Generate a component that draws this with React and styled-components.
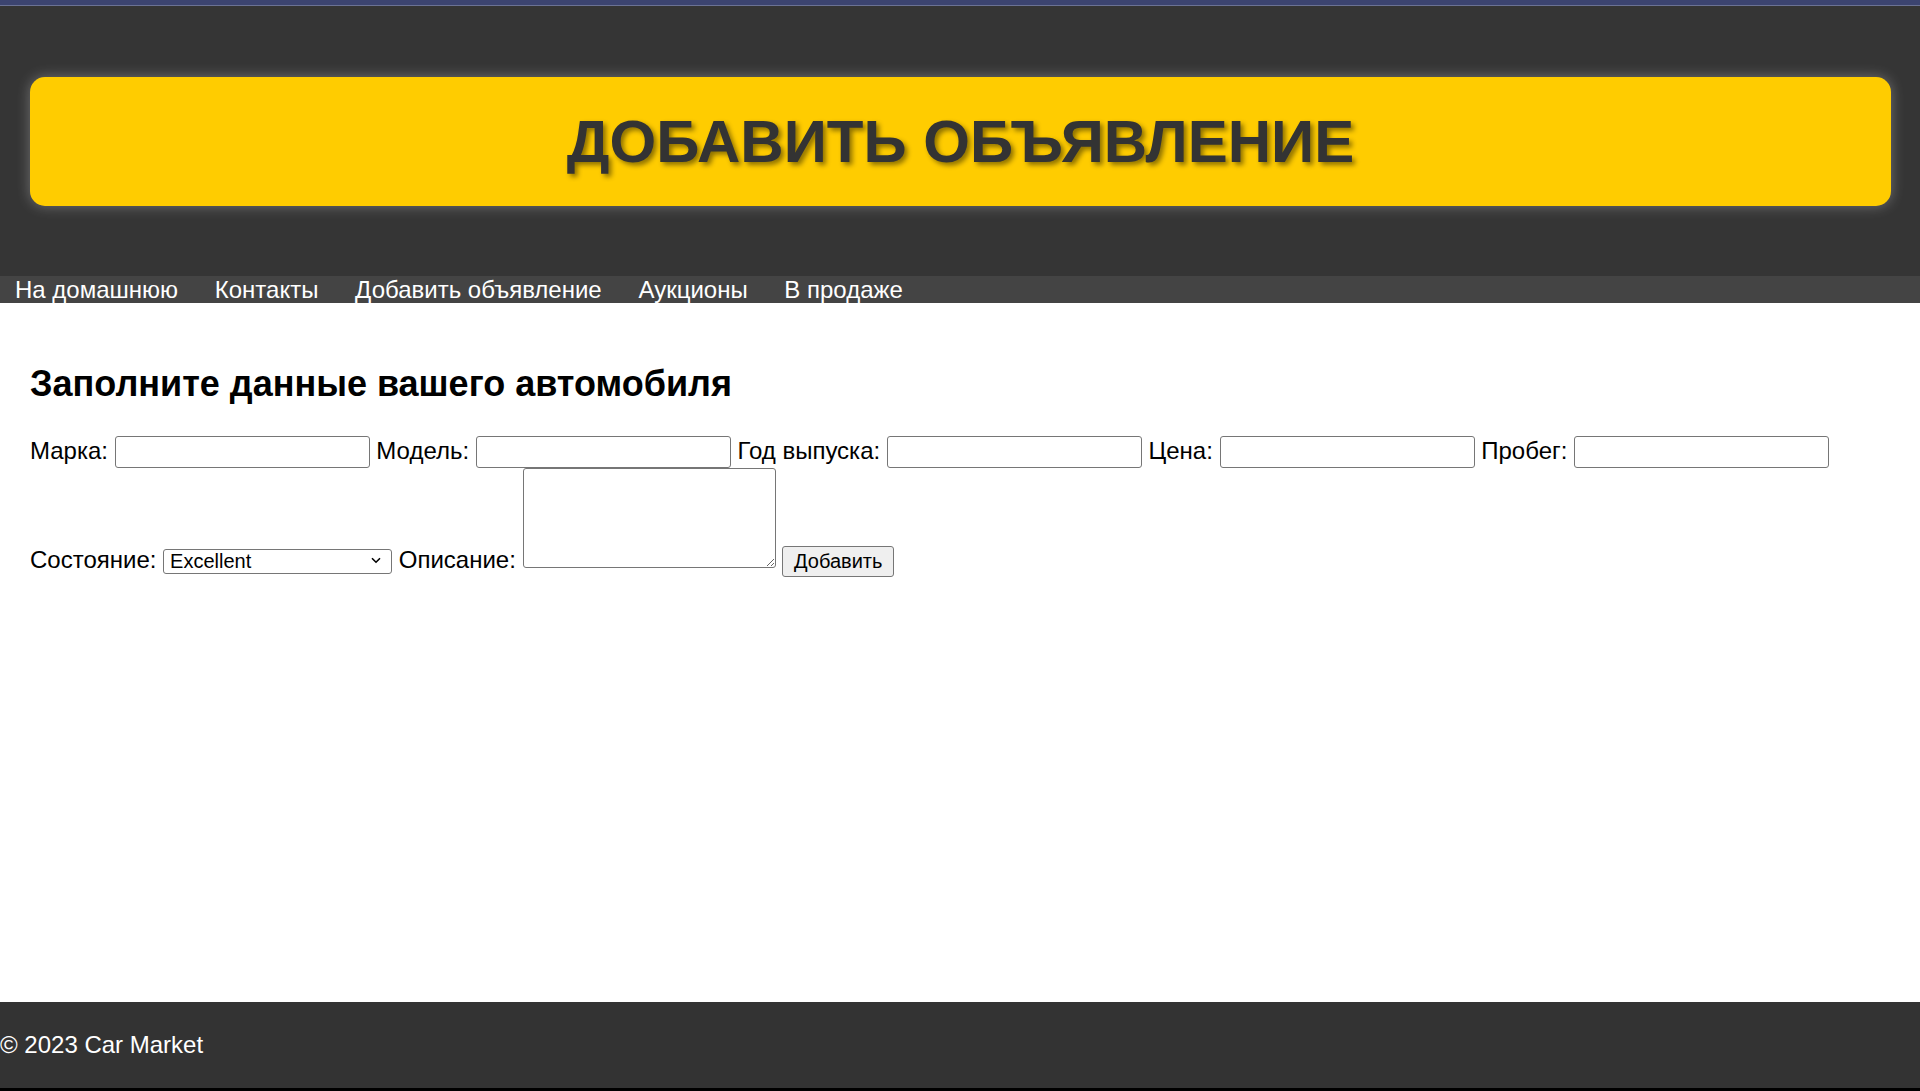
import React, { useState } from "react";
import styled, { createGlobalStyle } from "styled-components";

const GlobalStyle = createGlobalStyle`
  html, body {
    margin: 0;
    padding: 0;
    background: #fff;
  }
  body {
    font-family: "Liberation Sans", Arial, sans-serif;
  }
`;

const Page = styled.div`
  min-height: 100vh;
  display: flex;
  flex-direction: column;
  font-family: "Liberation Sans", Arial, sans-serif;
  font-size: 24px;
  color: #000;
`;

const TopStrip = styled.div`
  height: 5px;
  background: #3c4470;
  border-bottom: 1px solid #6b7294;
`;

const BottomStrip = styled.div`
  height: 3px;
  background: #000;
`;

const Header = styled.header`
  background: #353535;
  padding: 71px 29px 70px 30px;
`;

const Banner = styled.div`
  height: 129px;
  display: flex;
  align-items: center;
  justify-content: center;
  background: #ffcc00;
  border-radius: 15px;
  box-shadow: 0 0 14px rgba(255, 255, 255, 0.3);
`;

const BannerTitle = styled.h1`
  margin: 0;
  font-size: 60px;
  font-weight: bold;
  color: #333;
  text-shadow: 3px 3px 5px rgba(0, 0, 0, 0.45);
`;

const Nav = styled.nav`
  display: flex;
  gap: 36.7px;
  height: 27px;
  line-height: 27px;
  padding-left: 15px;
  background: #444;
`;

const NavLink = styled.a`
  color: #fff;
  text-decoration: none;
  white-space: nowrap;
`;

const Main = styled.main`
  flex: 1;
  padding: 28px 30px 0;
`;

const Title = styled.h2`
  margin: 32px 0 31px;
  font-size: 36px;
  font-weight: bold;
`;

const Form = styled.form`
  line-height: normal;
`;

const Field = styled.input`
  box-sizing: border-box;
  width: 255px;
  height: 32px;
  padding: 1px 3px;
  border: 1px solid #767676;
  border-radius: 3px;
  font-family: "Liberation Sans", Arial, sans-serif;
  font-size: 20px;
  margin: 0;
`;

const SelectWrap = styled.span`
  position: relative;
  display: inline-block;
`;

const Select = styled.select`
  box-sizing: border-box;
  width: 229px;
  height: 25px;
  padding: 0 24px 0 6px;
  border: 1px solid #767676;
  border-radius: 3px;
  appearance: none;
  font-family: "Liberation Sans", Arial, sans-serif;
  font-size: 20px;
  background: #fff;
  color: #000;
  margin: 0;
`;

const Chevron = styled.svg`
  position: absolute;
  right: 11px;
  top: 50%;
  width: 10px;
  height: 7px;
  margin-top: -3px;
  pointer-events: none;
`;

const TextArea = styled.textarea`
  box-sizing: border-box;
  width: 253px;
  height: 100px;
  border: 1px solid #767676;
  border-radius: 3px;
  font-family: "Liberation Mono", monospace;
  font-size: 20px;
  margin: 0;
`;

const Submit = styled.button`
  box-sizing: border-box;
  width: 112px;
  height: 31px;
  padding: 0;
  border: 1px solid #767676;
  border-radius: 3px;
  background: #efefef;
  font-family: "Liberation Sans", Arial, sans-serif;
  font-size: 20px;
  color: #000;
  margin: 0;
`;

const Footer = styled.footer`
  height: 86px;
  display: flex;
  align-items: center;
  background: #333;
  color: #fff;
`;

const links = ["На домашнюю", "Контакты", "Добавить объявление", "Аукционы", "В продаже"];

export default function App() {
  const [form, setForm] = useState({
    brand: "",
    model: "",
    year: "",
    price: "",
    mileage: "",
    condition: "Excellent",
    description: "",
  });

  const onField = (e) => {
    const { name, value } = e.target;
    setForm({ ...form, [name]: value });
  };

  return (
    <>
      <GlobalStyle />
      <Page>
        <TopStrip />
        <Header>
          <Banner>
            <BannerTitle>ДОБАВИТЬ ОБЪЯВЛЕНИЕ</BannerTitle>
          </Banner>
        </Header>
        <Nav>
          {links.map((l) => (
            <NavLink key={l} href="#">
              {l}
            </NavLink>
          ))}
        </Nav>
        <Main>
          <Title>Заполните данные вашего автомобиля</Title>
          <Form onSubmit={(e) => e.preventDefault()}>
            <label>Марка:</label> <Field name="brand" value={form.brand} onChange={onField} />{" "}
            <label>Модель:</label> <Field name="model" value={form.model} onChange={onField} />{" "}
            <label>Год выпуска:</label> <Field name="year" value={form.year} onChange={onField} />{" "}
            <label>Цена:</label> <Field name="price" value={form.price} onChange={onField} />{" "}
            <label>Пробег:</label> <Field name="mileage" value={form.mileage} onChange={onField} />{" "}
            <label>Состояние:</label>{" "}
            <SelectWrap>
              <Select name="condition" value={form.condition} onChange={onField}>
                <option>Excellent</option>
                <option>Good</option>
                <option>Fair</option>
                <option>Poor</option>
              </Select>
              <Chevron viewBox="0 0 10 7">
                <path d="M1 1.2 L5 5.2 L9 1.2" fill="none" stroke="#000" strokeWidth="1.6" />
              </Chevron>
            </SelectWrap>{" "}
            <label>Описание:</label>{" "}
            <TextArea name="description" value={form.description} onChange={onField} />{" "}
            <Submit type="submit">Добавить</Submit>
          </Form>
        </Main>
        <Footer>© 2023 Car Market</Footer>
        <BottomStrip />
      </Page>
    </>
  );
}
